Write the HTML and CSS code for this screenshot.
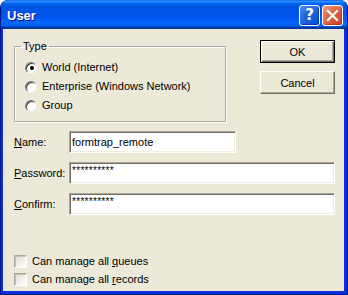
FILE: index.html
```html
<!DOCTYPE html>
<html lang="en">
<head>
    <meta charset="UTF-8">
    <title>User</title>
    <link rel="stylesheet" href="styles.css">
</head>
<body>
    <div class="window">
        <div class="titlebar">
            <span class="title">User</span>
            <div class="title-buttons">
                <button class="tb-btn tb-help" type="button">?</button>
                <button class="tb-btn tb-close" type="button">
                    <svg width="13" height="13" viewBox="0 0 13 13">
                        <path d="M2 2 L11 11 M11 2 L2 11" stroke="#fff" stroke-width="2.2" stroke-linecap="square"/>
                    </svg>
                </button>
            </div>
        </div>

        <div class="content">
            <div class="top-row">
                <fieldset class="group">
                    <legend>Type</legend>
                    <label class="radio-row"><span class="radio checked"></span><span>World (Internet)</span></label>
                    <label class="radio-row"><span class="radio"></span><span>Enterprise (Windows Network)</span></label>
                    <label class="radio-row"><span class="radio"></span><span>Group</span></label>
                </fieldset>
                <div class="buttons">
                    <button class="btn btn-default" type="button">OK</button>
                    <button class="btn" type="button">Cancel</button>
                </div>
            </div>

            <div class="fields">
                <div class="field-row">
                    <label class="field-label"><u>N</u>ame:</label>
                    <input class="edit edit-short" type="text" value="formtrap_remote">
                </div>
                <div class="field-row">
                    <label class="field-label"><u>P</u>assword:</label>
                    <input class="edit edit-wide edit-secret" type="text" value="**********">
                </div>
                <div class="field-row">
                    <label class="field-label"><u>C</u>onfirm:</label>
                    <input class="edit edit-wide edit-secret" type="text" value="**********">
                </div>
            </div>

            <div class="options">
                <label class="check-row"><span class="check"></span><span>Can manage all <u>q</u>ueues</span></label>
                <label class="check-row"><span class="check"></span><span>Can manage all <u>r</u>ecords</span></label>
            </div>
        </div>
    </div>
</body>
</html>
```

FILE: styles.css
```css
body {
    margin: 0;
    background-color: #fff;
    font-family: "Liberation Sans", Arial, sans-serif;
    font-size: 11px;
    color: #000;
}

.window {
    width: 348px;
    height: 295px;
    box-sizing: border-box;
    display: flex;
    flex-direction: column;
    background-color: #0831d9;
    border: 1px solid #00138c;
    border-top: 0;
    border-radius: 8px 8px 0 0;
    overflow: hidden;
}

.titlebar {
    height: 29px;
    margin: 0 -1px;
    display: flex;
    align-items: center;
    justify-content: space-between;
    padding: 0 5px 0 7px;
    background: linear-gradient(to bottom, #0058ee 0%, #3a93ff 4%, #288eff 6%, #127dff 8%, #036ffc 10%, #0262ee 14%, #0057e5 20%, #0054e3 24%, #0055eb 56%, #005bf5 66%, #026afe 76%, #0062ef 86%, #0052d6 92%, #0040ab 94%, #003092 100%);
    border-radius: 8px 8px 0 0;
}

.title {
    color: #fff;
    font-weight: bold;
    font-size: 13px;
    padding-top: 2px;
    text-shadow: 1px 1px 0 #0f1089;
}

.title-buttons {
    display: flex;
    gap: 2px;
    padding-top: 1px;
}

.tb-btn {
    width: 21px;
    height: 21px;
    padding: 0;
    border: 1px solid #fff;
    border-radius: 3px;
    display: flex;
    align-items: center;
    justify-content: center;
    color: #fff;
    font-family: "DejaVu Sans", sans-serif;
    font-weight: bold;
    font-size: 15px;
    line-height: 1;
}

.tb-help {
    background: radial-gradient(circle at 90% 90%, #0054e9 0%, #2263d5 55%, #4d8ffa 100%);
    box-shadow: inset -1px -1px 1px rgba(0, 20, 120, 0.5);
}

.tb-close {
    background: radial-gradient(circle at 90% 90%, #cc4628 0%, #dc6342 55%, #f0a48b 100%);
    box-shadow: inset -1px -1px 1px rgba(120, 20, 0, 0.4);
}

.content {
    flex: 1;
    margin: 0 3px 3px 2px;
    background-color: #ece9d8;
    display: flex;
    flex-direction: column;
    padding: 11px 9px 5px 11px;
}

.top-row {
    display: flex;
    justify-content: space-between;
    align-items: flex-start;
}

.group {
    width: 212px;
    box-sizing: border-box;
    margin: 0;
    padding: 8px 6px 9px;
    border: 1px solid #aca899;
    box-shadow: inset 1px 1px 0 #fff, 1px 1px 0 #fff;
    display: flex;
    flex-direction: column;
    gap: 6px;
}

.group legend {
    padding: 0 2px;
    line-height: 13px;
}

.radio-row {
    display: flex;
    align-items: center;
    height: 13px;
    line-height: 13px;
    padding-left: 4px;
}

.radio {
    width: 12px;
    height: 12px;
    box-sizing: border-box;
    border-radius: 50%;
    margin-right: 5px;
    background: radial-gradient(circle at 70% 70%, #fff 40%, #e4e3dc 100%);
    border: 1px solid;
    border-color: #808080 #f1efe2 #f1efe2 #808080;
    box-shadow: inset 1px 1px 0 #404040;
    display: flex;
    align-items: center;
    justify-content: center;
}

.radio.checked::after {
    content: "";
    width: 4px;
    height: 4px;
    border-radius: 50%;
    background-color: #000;
    margin: 1px 0 0 1px;
}

.buttons {
    display: flex;
    flex-direction: column;
    gap: 8px;
}

.btn {
    width: 75px;
    height: 23px;
    padding: 0;
    font-family: "Liberation Sans", Arial, sans-serif;
    font-size: 11px;
    color: #000;
    background-color: #ece9d8;
    border: 1px solid;
    border-color: #fff #716f64 #716f64 #fff;
    box-shadow: inset -1px -1px 0 #aca899;
}

.btn-default {
    border-color: #000;
    box-shadow: inset 1px 1px 0 #fff, inset -1px -1px 0 #716f64, inset -2px -2px 0 #aca899;
}

.fields {
    margin-top: 9px;
    display: flex;
    flex-direction: column;
    gap: 9px;
}

.field-row {
    display: flex;
    align-items: center;
}

.field-label {
    width: 55px;
}

.edit {
    height: 22px;
    box-sizing: border-box;
    margin: 0;
    padding: 0 1px;
    font-family: "Liberation Sans", Arial, sans-serif;
    font-size: 11px;
    background-color: #fff;
    border: 1px solid;
    border-color: #aca899 #fff #fff #aca899;
    box-shadow: inset 1px 1px 0 #716f64, inset -1px -1px 0 #f1efe2;
    outline: none;
}

.edit-short {
    width: 167px;
    padding-left: 2px;
}

.edit-wide {
    width: 266px;
}

.edit-secret {
    font-size: 10px;
    letter-spacing: 0.3px;
    padding: 0 2px 5px;
}

.options {
    margin-top: auto;
    display: flex;
    flex-direction: column;
    gap: 5px;
}

.check-row {
    display: flex;
    align-items: center;
    height: 13px;
    line-height: 13px;
}

.check {
    width: 13px;
    height: 13px;
    box-sizing: border-box;
    margin-right: 5px;
    border: 1px solid;
    border-color: #aca899 #fff #fff #aca899;
    box-shadow: inset 1px 1px 0 #c5c2b2;
    background: linear-gradient(135deg, #dcdad0 0%, #f3f2ec 60%, #fff 100%);
}
```
